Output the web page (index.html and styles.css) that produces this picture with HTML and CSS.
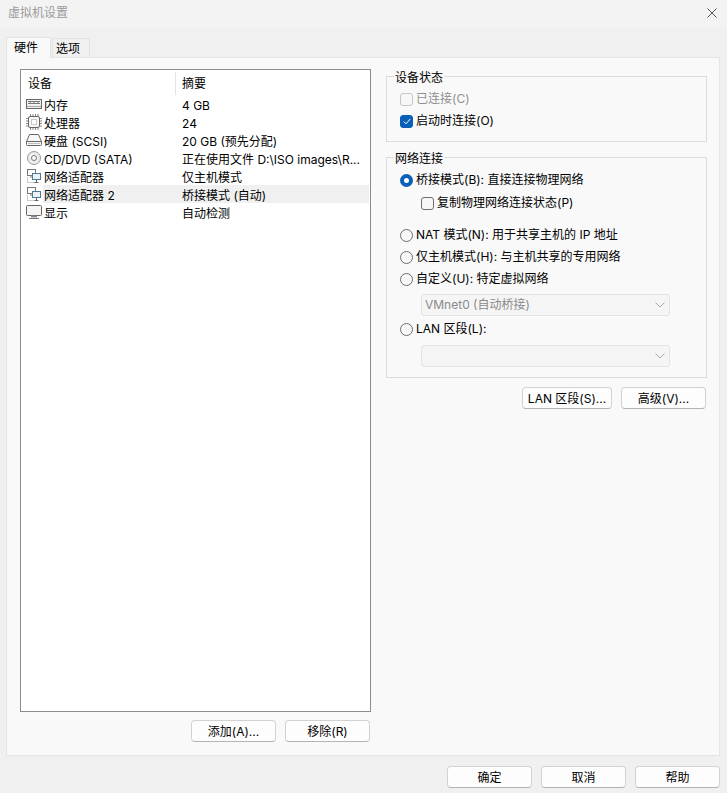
FILE: index.html
```html
<!DOCTYPE html>
<html lang="zh-CN">
<head>
<meta charset="utf-8">
<title>虚拟机设置</title>
<link rel="stylesheet" href="styles.css">
</head>
<body>
<div class="window">
  <header class="titlebar">
    <span class="title">虚拟机设置</span>
    <svg class="close" width="10" height="10" viewBox="0 0 10 10"><path d="M.5.5l9 9M9.5.5l-9 9" stroke="#555" stroke-width="1" fill="none"/></svg>
  </header>
  <nav class="tabs">
    <span class="tab active">硬件</span>
    <span class="tab">选项</span>
  </nav>
  <main class="panel">
    <section class="left">
      <div class="list">
        <div class="list-head">
          <span class="head-a">设备</span>
          <span class="head-b">摘要</span>
        </div>
        <div class="row">
          <svg class="ico" viewBox="0 0 16 16"><rect x=".5" y="3.5" width="15" height="9" fill="#f2f2f2" stroke="#666"/><path d="M2 5.5h12M2 7.5h12" stroke="#777"/><path d="M3 6.5h2M7 6.5h2M11 6.5h2" stroke="#bbb"/><path d="M1 10.5h14" stroke="#aaa"/></svg>
          <div class="cells"><span class="label">内存</span><span class="value">4 GB</span></div>
        </div>
        <div class="row">
          <svg class="ico" viewBox="0 0 16 16"><rect x="2.5" y="2.5" width="11" height="11" rx="1.5" fill="#f7f7f7" stroke="#666"/><path d="M5.5 5.5h5v5h-5z" fill="#fff" stroke="#999" stroke-dasharray="1 1"/><path d="M4.5 0v2M7 0v2M9.5 0v2M12 0v2M4.5 14v2M7 14v2M9.5 14v2M12 14v2M0 4.5h2M0 7h2M0 9.5h2M0 12h2M14 4.5h2M14 7h2M14 9.5h2M14 12h2" stroke="#888"/></svg>
          <div class="cells"><span class="label">处理器</span><span class="value">24</span></div>
        </div>
        <div class="row">
          <svg class="ico" viewBox="0 0 16 16"><path d="M3.5 2.5h9l3 7v3a1 1 0 0 1-1 1h-13a1 1 0 0 1-1-1v-3z" fill="#f8f8f8" stroke="#666"/><path d="M.5 9.5h15" stroke="#666"/><path d="M2 11.5h12" stroke="#bbb"/></svg>
          <div class="cells"><span class="label">硬盘 (SCSI)</span><span class="value">20 GB (预先分配)</span></div>
        </div>
        <div class="row">
          <svg class="ico" viewBox="0 0 16 16"><circle cx="8" cy="8" r="6.5" fill="#ececec" stroke="#999"/><circle cx="8" cy="8" r="2.5" fill="#fff" stroke="#777"/><path d="M4 8a4 4 0 0 1 4-4" fill="none" stroke="#fff"/></svg>
          <div class="cells"><span class="label">CD/DVD (SATA)</span><span class="value">正在使用文件 D:\ISO images\R...</span></div>
        </div>
        <div class="row">
          <svg class="ico" viewBox="0 0 16 16"><path d="M1.5 9.5v5h9" fill="none" stroke="#999" stroke-dasharray="1 1"/><rect x="1.5" y="1.5" width="8" height="6" fill="#fff" stroke="#777"/><path d="M5 8v2" stroke="#777"/><rect x="6.5" y="5.5" width="8" height="6" fill="#eaf2f7" stroke="#4a7a96"/><path d="M10.5 12v2M8.5 14.5h4" stroke="#666"/></svg>
          <div class="cells"><span class="label">网络适配器</span><span class="value">仅主机模式</span></div>
        </div>
        <div class="row selected">
          <svg class="ico" viewBox="0 0 16 16"><path d="M1.5 9.5v5h9" fill="none" stroke="#999" stroke-dasharray="1 1"/><rect x="1.5" y="1.5" width="8" height="6" fill="#fff" stroke="#777"/><path d="M5 8v2" stroke="#777"/><rect x="6.5" y="5.5" width="8" height="6" fill="#eaf2f7" stroke="#4a7a96"/><path d="M10.5 12v2M8.5 14.5h4" stroke="#666"/></svg>
          <div class="cells"><span class="label">网络适配器 2</span><span class="value">桥接模式 (自动)</span></div>
        </div>
        <div class="row">
          <svg class="ico" viewBox="0 0 16 16"><rect x=".5" y="1.5" width="15" height="10" rx="1" fill="#f4f4f4" stroke="#666"/><path d="M5 12.5h6" stroke="#888" stroke-width="2"/><path d="M3 14.5h10" stroke="#777"/></svg>
          <div class="cells"><span class="label">显示</span><span class="value">自动检测</span></div>
        </div>
      </div>
      <div class="left-actions">
        <button class="btn btn-list">添加(A)...</button>
        <button class="btn btn-list">移除(R)</button>
      </div>
    </section>
    <section class="right">
      <div class="group group-device">
        <span class="legend">设备状态</span>
        <div class="opt opt-first disabled"><span class="box"></span>已连接(C)</div>
        <div class="opt"><span class="box checked"><svg width="8" height="7" viewBox="0 0 8 7"><path d="M.8 3.6l2.2 2.2L7.2 1" fill="none" stroke="#fff" stroke-width="1"/></svg></span>启动时连接(O)</div>
      </div>
      <div class="group group-net">
        <span class="legend">网络连接</span>
        <div class="opt opt-first"><span class="radio on"></span>桥接模式(B): 直接连接物理网络</div>
        <div class="opt indent"><span class="box dark"></span>复制物理网络连接状态(P)</div>
        <div class="opt gap-big"><span class="radio"></span>NAT 模式(N): 用于共享主机的 IP 地址</div>
        <div class="opt"><span class="radio"></span>仅主机模式(H): 与主机共享的专用网络</div>
        <div class="opt"><span class="radio"></span>自定义(U): 特定虚拟网络</div>
        <div class="select">VMnet0 (自动桥接)<svg class="chev" width="10" height="6" viewBox="0 0 10 6"><path d="M.5.5L5 5 9.5.5" fill="none" stroke="#a8a8a8"/></svg></div>
        <div class="opt opt-lan"><span class="radio"></span>LAN 区段(L):</div>
        <div class="select select-lan"><svg class="chev" width="10" height="6" viewBox="0 0 10 6"><path d="M.5.5L5 5 9.5.5" fill="none" stroke="#a8a8a8"/></svg></div>
      </div>
      <div class="right-actions">
        <button class="btn btn-lan">LAN 区段(S)...</button>
        <button class="btn btn-adv">高级(V)...</button>
      </div>
    </section>
  </main>
  <footer class="footer">
    <button class="btn btn-foot">确定</button>
    <button class="btn btn-foot">取消</button>
    <button class="btn btn-foot">帮助</button>
  </footer>
</div>
</body>
</html>
```
FILE: styles.css
```css
* { box-sizing: border-box; }
html, body { margin: 0; padding: 0; }
body {
  width: 727px;
  height: 793px;
  overflow: hidden;
  background: #f0f0f0;
  font: 12px/16px "Inter", "Noto Sans CJK SC", sans-serif;
  color: #000;
}
.window { display: flex; flex-direction: column; height: 793px; }
.titlebar {
  height: 28px;
  flex: none;
  display: flex;
  align-items: center;
  justify-content: space-between;
  padding: 0 10px 3px 8px;
  background: #f3f3f3;
}
.title { color: #9b9b9b; }
.tabs {
  height: 30px;
  flex: none;
  display: flex;
  align-items: flex-end;
  padding-left: 6px;
  position: relative;
  z-index: 1;
}
.tab {
  width: 38px;
  height: 19px;
  margin-left: 1px;
  margin-bottom: 1px;
  padding-left: 3px;
  line-height: 20px;
  background: #f0f0f0;
  border: 1px solid #e3e3e3;
  border-bottom: 0;
}
.tab.active {
  width: 45px;
  height: 21px;
  margin-left: 0;
  margin-bottom: 0;
  padding-left: 7px;
  line-height: 20px;
  background: #f9f9f9;
}
.panel {
  height: 699px;
  flex: none;
  margin: -1px 7px 0 6px;
  padding: 11px 13px 0 13px;
  background: #f9f9f9;
  border: 1px solid #e5e5e5;
  display: flex;
  gap: 15px;
}
.left { width: 351px; flex: none; }
.list {
  height: 643px;
  background: #fff;
  border: 1px solid #8c8c8c;
}
.list-head {
  height: 25px;
  display: flex;
  align-items: center;
  padding-top: 2px;
}
.head-a { width: 154px; padding-left: 7px; }
.head-b {
  flex: 1;
  height: 23px;
  line-height: 24px;
  padding-left: 6px;
  border-left: 1px solid #e5e5e5;
}
.row { height: 18px; display: flex; align-items: center; padding-left: 5px; padding-right: 1px; }
.ico { width: 16px; height: 16px; flex: none; margin-right: 1px; }
.cells { flex: 1; display: flex; height: 18px; padding-top: 4px; align-items: center; white-space: nowrap; }
.selected .cells { background: #f0f0f0; }
.label { width: 139px; padding-left: 1px; flex: none; }
.value { flex: 1; }
.left-actions { display: flex; justify-content: flex-end; gap: 9px; margin-top: 8px; padding-right: 1px; }
.btn {
  font: inherit;
  color: #000;
  background: #fdfdfd;
  border: 1px solid #d2d2d2;
  border-bottom-color: #b4b4b4;
  border-radius: 4px;
  padding: 1px 0 0;
  white-space: nowrap;
}
.btn-list { width: 85px; height: 22px; }
.right { width: 321px; flex: none; padding-top: 7px; }
.group {
  border: 1px solid #dcdcdc;
  padding: 0 0 0 13px;
}
.group-device { height: 66px; }
.group-net { height: 221px; margin-top: 15px; }
.legend {
  display: block;
  width: fit-content;
  height: 16px;
  margin: -7px 0 0 -6px;
  padding: 0 1px;
  background: #f9f9f9;
}
.opt { height: 16px; display: flex; align-items: center; white-space: nowrap; margin-top: 6px; }
.group-device .opt-first { margin-top: 5px; }
.group-net .opt-first { margin-top: 5px; }
.indent { margin-left: 21px; margin-top: 7px; }
.gap-big { margin-top: 16px; }
.opt-lan { margin-top: 5px; }
.box, .radio { width: 13px; height: 13px; flex: none; margin-right: 3px; }
.box {
  border: 1px solid #c6c6c6;
  border-radius: 3px;
  background: #f7f7f7;
  display: flex;
  align-items: center;
  justify-content: center;
}
.box.dark { border-color: #6e6e6e; }
.box.checked { background: #0a5fb8; border-color: #0a5fb8; }
.radio { border: 1px solid #6e6e6e; border-radius: 50%; background: #f7f7f7; }
.radio.on { border: 4px solid #0a5fb8; background: #fff; }
.disabled { color: #8f8f8f; }
.select {
  width: 249px;
  height: 22px;
  margin: 7px 0 0 21px;
  padding: 0 4px 0 3px;
  display: flex;
  align-items: center;
  justify-content: space-between;
  color: #8a8a8a;
  background: #f5f5f5;
  border: 1px solid #e4e4e4;
  border-radius: 3px;
}
.select-lan { margin-top: 8px; justify-content: flex-end; }
.right-actions { display: flex; gap: 9px; justify-content: flex-end; margin-top: 9px; padding-right: 1px; }
.btn-lan { width: 90px; height: 22px; }
.btn-adv { width: 85px; height: 22px; }
.footer {
  flex: 1;
  display: flex;
  justify-content: flex-end;
  gap: 9px;
  padding: 10px 7px 0 0;
}
.btn-foot { width: 85px; height: 22px; }
```
